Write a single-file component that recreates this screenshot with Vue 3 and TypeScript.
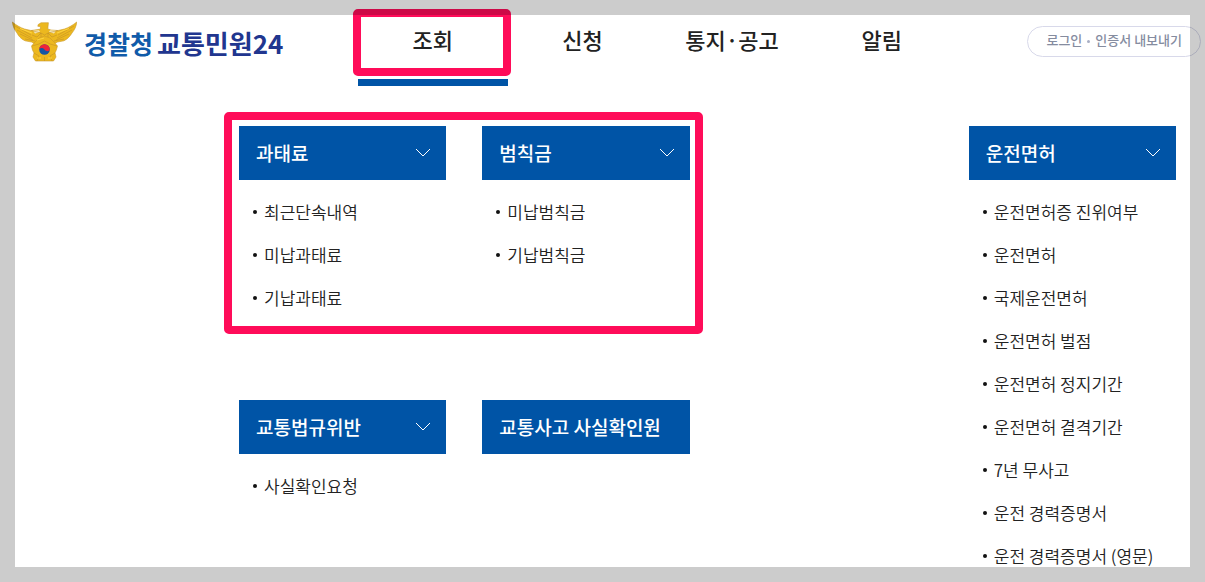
<script setup lang="ts">
interface MenuGroup {
  title: string
  items: string[]
  place: string
}

const tabs: string[] = ['조회', '신청', '통지·공고', '알림']
const activeTab = '조회'

const groups: MenuGroup[] = [
  { title: '과태료', items: ['최근단속내역', '미납과태료', '기납과태료'], place: 'fine' },
  { title: '범칙금', items: ['미납범칙금', '기납범칙금'], place: 'penalty' },
  {
    title: '운전면허',
    items: [
      '운전면허증 진위여부',
      '운전면허',
      '국제운전면허',
      '운전면허 벌점',
      '운전면허 정지기간',
      '운전면허 결격기간',
      '7년 무사고',
      '운전 경력증명서',
      '운전 경력증명서 (영문)',
    ],
    place: 'license',
  },
  { title: '교통법규위반', items: ['사실확인요청'], place: 'violation' },
  { title: '교통사고 사실확인원', items: [], place: 'accident' },
]
</script>

<template>
  <div class="page">
    <header class="header">
      <a class="logo" href="#" aria-label="경찰청 교통민원24">
        <svg class="emblem" viewBox="0 0 65 41" aria-hidden="true">
          <g fill="#ecb81f" stroke="#c9982c" stroke-width=".6" stroke-linejoin="round">
            <path d="M.4 1C4 4 8 6.500 12.500 8L19 9.500L26 8.500L28.500 8L28.300 5.500L25.800 5.300L26.200 3.500L29 1.800L36.400 1.700L35.800 8L39 9L46 9.500L52.500 8C57 6.500 61 4 64.700 1C64.500 5 62.500 9 60 12C58 15.500 55 18.300 52 19.800L45.500 21L42 23H23L19.500 21L13 19.800C9 18 6.500 15 5 12C2.500 9 .8 5 .4 1Z" />
            <path d="M23 21L27 17L32.500 15L38 17L42 21L45.500 25L44.300 29L43 32L44 36L41.500 40H23.500L21 36L22 32L20.500 29L19.500 25Z" />
          </g>
          <path d="M21 9.500L27 9.200L28 11L23 12.500ZM44 9.500L38 9.200L37 11L42 12.500Z" fill="#f3e6bd" />
          <g fill="none" stroke="#bd8b28" stroke-width=".5">
            <path d="M3 5L19 14M5 9L20 17M8 13L21 19M13 18L23 20M62 5L46 14M60 9L45 17M57 13L44 19M52 18L42 20" />
            <path d="M19 9.500L29 12L25 16L20 14M46 9.500L36 12L40 16L45 14M29 12V16M36 12V16M29 12L32.500 14L36 12" />
            <path d="M20 25L27 23L32.500 20L38 23L45 25M22 32L27 35L25 40M43 32L38 35L40 40M32.500 36V40" />
          </g>
          <path d="M8 7.500L20 12M57 7.500L45 12M25 19L32 17M25 37H29M36 37H40" fill="none" stroke="#ffd540" />
          <circle cx="32.500" cy="28.500" r="5.300" fill="#1456a4" />
          <path d="M27.200 28.500A5.300 5.300 0 0 1 37.800 28.500C36.800 31 34 30.500 32.500 28.500C31 26.500 28.200 26.500 27.200 28.500Z" fill="#ee2339" />
        </svg>
        <span class="wordmark"><span class="agency">경찰청</span><span>교통민원24</span></span>
      </a>

      <nav class="tabs">
        <a v-for="tab in tabs" :key="tab" class="tab" :class="{ active: tab === activeTab }" href="#">
          {{ tab }}
          <span v-if="tab === activeTab" class="mark tab-mark"></span>
        </a>
      </nav>

      <div class="account">
        <a href="#">로그인</a>
        <span class="separator"></span>
        <a href="#">인증서 내보내기</a>
      </div>
    </header>

    <main class="menu">
      <section v-for="group in groups" :key="group.title" :class="group.place">
        <button v-if="group.items.length" class="title" type="button">
          {{ group.title }}
          <svg class="chevron" viewBox="0 0 16 10" aria-hidden="true">
            <path d="M1 1L8 8L15 1" fill="none" stroke="currentColor" />
          </svg>
        </button>
        <a v-else class="title" href="#">{{ group.title }}</a>
        <ul v-if="group.items.length" class="items">
          <li v-for="item in group.items" :key="item"><a href="#">{{ item }}</a></li>
        </ul>
      </section>
      <div class="mark group-mark"></div>
    </main>

    <div class="frame"></div>
  </div>
</template>

<style>
body {
  margin: 0;
  background: #fff;
}
</style>

<style scoped>
.page {
  min-height: 100vh;
  box-sizing: border-box;
  overflow: hidden;
  font-family: "Noto Sans CJK KR", "Noto Sans", sans-serif;
  color: #222;
}

a {
  color: inherit;
  text-decoration: none;
}

.frame {
  position: fixed;
  inset: 0;
  border: 15px solid rgba(0, 0, 0, 0.2);
  pointer-events: none;
}

.header {
  display: flex;
  height: 86px;
  padding: 0 4px 0 12px;
}

.logo {
  display: flex;
  flex: 0 0 346px;
  gap: 7px;
  height: 82px;
  align-items: center;
}

.emblem {
  width: 65px;
  height: 41px;
}

.wordmark {
  display: flex;
  align-items: baseline;
  gap: 4px;
  padding-top: 4px;
  font-size: 26px;
  font-weight: 700;
  line-height: 38px;
  color: #21368f;
  white-space: nowrap;
}

.agency {
  font-size: 25px;
  color: #105ba9;
}

.tabs {
  display: flex;
  flex: 1;
}

.tab {
  position: relative;
  box-sizing: border-box;
  flex: 1;
  border-bottom: 7px solid transparent;
  font-size: 22px;
  font-weight: 500;
  line-height: 79px;
  text-align: center;
  white-space: nowrap;
}

.tab.active {
  border-bottom-color: #0054a6;
}

.mark {
  box-sizing: border-box;
  border: 8px solid #ff0c59;
  border-radius: 5px;
  pointer-events: none;
}

.tab-mark {
  position: absolute;
  top: 9px;
  left: -5px;
  right: -3px;
  height: 67px;
}

.account {
  display: flex;
  flex: none;
  align-items: center;
  gap: 5px;
  box-sizing: border-box;
  height: 31px;
  margin: 26px 0 0 71px;
  padding: 0 18px;
  border: 1px solid #d8d9ea;
  border-radius: 16px;
  font-size: 13px;
  font-weight: 500;
  line-height: 26px;
  color: #858c9f;
}

.account a {
  padding-bottom: 3px;
}

.separator {
  width: 3px;
  height: 3px;
  border-radius: 50%;
  background: #a8aec4;
}

.menu {
  display: grid;
  grid-template-columns: repeat(4, minmax(0, 1fr));
  grid-template-rows: auto 1fr;
  gap: 81px 36px;
  padding: 40px 29px 0 239px;
}

.fine {
  grid-area: 1 / 1;
}

.penalty {
  grid-area: 1 / 2;
}

.violation {
  grid-area: 2 / 1;
}

.accident {
  grid-area: 2 / 2;
}

.license {
  grid-area: 1 / 4 / span 2;
}

.group-mark {
  grid-area: 1 / 1 / auto / span 2;
  margin: -14px -13px -15px -15px;
}

.title {
  display: flex;
  align-items: center;
  justify-content: space-between;
  box-sizing: border-box;
  width: 100%;
  height: 54px;
  padding: 0 15px 2px 17px;
  border: 0;
  background: #0054a6;
  color: #fff;
  font-family: inherit;
  font-size: 19px;
  font-weight: 500;
  text-align: left;
  white-space: nowrap;
}

.chevron {
  width: 16px;
  height: 10px;
  margin-top: 2px;
}

.items {
  margin: 10px 0 0;
  padding: 0 0 0 14px;
  list-style: none;
  font-size: 17px;
  font-weight: 350;
  line-height: 43px;
  white-space: nowrap;
}

.items li {
  display: flex;
  align-items: center;
  gap: 7px;
}

.items li::before {
  content: "";
  width: 4px;
  height: 4px;
  border-radius: 50%;
  background: #111;
}
</style>
